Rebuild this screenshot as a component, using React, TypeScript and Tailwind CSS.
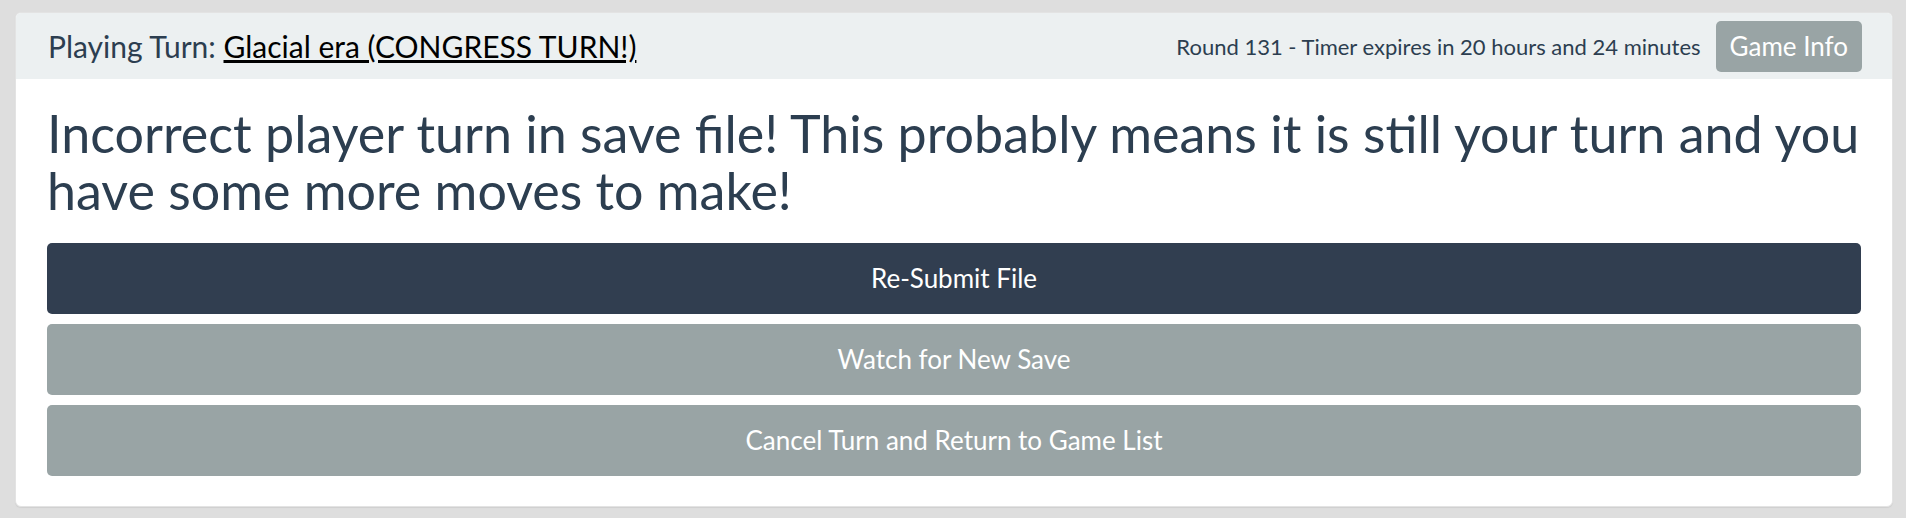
import React from "react";

export default function App() {
  return (
    <div
      className="min-h-screen w-full bg-[#dedede] pt-[12px] pl-[15px] pr-[13px]"
      style={{ fontFamily: "Lato, 'Open Sans', sans-serif" }}
    >
      <div className="overflow-hidden rounded-[6px] border border-[#e3e3e3] bg-white shadow-[0_1px_1px_0_#cfcfcf]">
        <div className="flex h-[66px] items-center justify-between bg-[#ecf0f1] pl-[32px] pr-[30px]">
          <div className="text-[30px] text-[#2c3e50]">
            Playing Turn:{" "}
            <a href="#" className="text-black underline">
              Glacial era (CONGRESS TURN!)
            </a>
          </div>
          <div className="flex items-center gap-[15px]">
            <span className="text-[22px] text-[#2c3e50]">
              Round 131 - Timer expires in 20 hours and 24 minutes
            </span>
            <button className="h-[51px] rounded-[5px] bg-[#99a4a5] px-[14px] text-[26px] text-white">
              Game Info
            </button>
          </div>
        </div>
        <div className="px-[31px] pt-[26px] pb-[30px]">
          <h2 className="mb-[24px] text-[52px] leading-[57px] text-[#2c3e50]">
            Incorrect player turn in save file! This probably means it is still your turn and you have some more moves to make!
          </h2>
          <div className="flex flex-col gap-[10px]">
            <button className="h-[71px] w-full rounded-[5px] bg-[#313e50] text-[26px] text-white">
              Re-Submit File
            </button>
            <button className="h-[71px] w-full rounded-[5px] bg-[#99a4a5] text-[26px] text-white">
              Watch for New Save
            </button>
            <button className="h-[71px] w-full rounded-[5px] bg-[#99a4a5] text-[26px] text-white">
              Cancel Turn and Return to Game List
            </button>
          </div>
        </div>
      </div>
    </div>
  );
}
